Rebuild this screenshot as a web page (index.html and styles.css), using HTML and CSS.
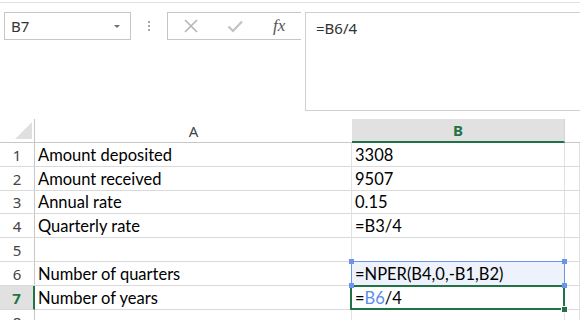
FILE: index.html
```html
<!doctype html>
<html lang="en">
<head>
    <meta charset="UTF-8">
    <title>Book1 - NPER</title>
    <link rel="stylesheet" href="styles.css">
</head>
<body>
<div class="edge"></div>
<div class="formula-row">
    <div class="namebox">
        <span>B7</span>
        <span class="caret"></span>
    </div>
    <div class="grip"><i></i><i></i><i></i></div>
    <div class="fxbox">
        <svg class="icon" width="16" height="16" viewBox="0 0 16 16">
            <path d="M2 2 L14 14 M14 2 L2 14" stroke="#b5b5b5" stroke-width="1.6" fill="none"/>
        </svg>
        <svg class="icon" width="16" height="16" viewBox="0 0 16 16">
            <path d="M1.5 8.5 L6 13 L15 3.5" stroke="#c2c2c2" stroke-width="2.2" fill="none"/>
        </svg>
        <span class="fx">fx</span>
    </div>
    <div class="formula">=B6/4</div>
</div>
<div class="sheet">
    <div class="cell corner"><span class="tri"></span></div>
    <div class="cell colhead">A</div>
    <div class="cell colhead sel">B</div>
    <div class="cell colhead blank"></div>

    <div class="cell rowhead">1</div>
    <div class="cell">Amount deposited</div>
    <div class="cell">3308</div>
    <div class="cell"></div>

    <div class="cell rowhead">2</div>
    <div class="cell">Amount received</div>
    <div class="cell">9507</div>
    <div class="cell"></div>

    <div class="cell rowhead">3</div>
    <div class="cell">Annual rate</div>
    <div class="cell">0.15</div>
    <div class="cell"></div>

    <div class="cell rowhead">4</div>
    <div class="cell">Quarterly rate</div>
    <div class="cell">=B3/4</div>
    <div class="cell"></div>

    <div class="cell rowhead">5</div>
    <div class="cell"></div>
    <div class="cell"></div>
    <div class="cell"></div>

    <div class="cell rowhead">6</div>
    <div class="cell">Number of quarters</div>
    <div class="cell ref">=NPER(B4,0,-B1,B2)
        <b class="knob tl"></b><b class="knob tr"></b><b class="knob bl"></b><b class="knob br"></b>
    </div>
    <div class="cell"></div>

    <div class="cell rowhead sel">7</div>
    <div class="cell">Number of years</div>
    <div class="cell active">=<span class="blue">B6</span>/4<b class="fill"></b></div>
    <div class="cell"></div>

    <div class="cell rowhead">8</div>
    <div class="cell"></div>
    <div class="cell"></div>
    <div class="cell"></div>
</div>
</body>
</html>
```

FILE: styles.css
```css
html,body{
    margin:0px;
    padding:0px;
    width:580px;
    height:320px;
    overflow:hidden;
    background:#fff;
}
.edge{
    height:2px;
    border-bottom:1px solid #e1e1e1;
}
.formula-row{
    display:flex;
    align-items:flex-start;
    padding-top:9px;
    padding-left:4px;
}
.namebox{
    box-sizing:border-box;
    width:127px;
    height:28px;
    border:1px solid #c6c6c6;
    display:flex;
    align-items:center;
    justify-content:space-between;
    padding:0 10px 0 6px;
    font-family:"Noto Sans",sans-serif;
    font-size:15px;
    color:#333;
}
.caret{
    width:0;
    height:0;
    border-left:3px solid transparent;
    border-right:3px solid transparent;
    border-top:3px solid #707070;
}
.grip{
    width:36px;
    height:28px;
    display:flex;
    flex-direction:column;
    align-items:center;
    justify-content:center;
    gap:2px;
}
.grip i{
    width:2px;
    height:2px;
    background:#a8a8a8;
}
.fxbox{
    box-sizing:border-box;
    width:134px;
    height:28px;
    border:1px solid #c6c6c6;
    border-right:none;
    display:flex;
    align-items:center;
    padding-left:15px;
    gap:28px;
}
.fxbox .icon{
    display:block;
}
.fx{
    font-family:"Liberation Serif",serif;
    font-style:italic;
    font-size:17px;
    color:#555;
    margin-left:2px;
}
.formula{
    box-sizing:border-box;
    flex:1;
    margin-left:4px;
    height:99px;
    border:1px solid #d0d0d0;
    border-right:none;
    padding:5px 10px;
    font-family:"Noto Sans",sans-serif;
    font-size:15px;
    color:#333;
}
.sheet{
    margin-top:8px;
    display:grid;
    grid-template-columns:35px 317px 213px 1fr;
    grid-template-rows:24px 24px 24px 23px 24px 24px 24px 24px 24px;
    font-family:"Lato",sans-serif;
    font-size:16.5px;
    color:#000;
}
.cell{
    position:relative;
    box-sizing:border-box;
    border-right:1px solid #e1e1e1;
    border-bottom:1px solid #dadada;
    padding:0 3px 1px;
    display:flex;
    align-items:flex-end;
    white-space:nowrap;
}
.corner{
    border-right:1px solid #c8c8c8;
    border-bottom:1px solid #c8c8c8;
    justify-content:flex-end;
    align-items:flex-end;
    padding:0 2px 3px 0;
}
.tri{
    width:17px;
    height:17px;
    background:#dfdfdf;
    clip-path:polygon(100% 0,100% 100%,0 100%);
}
.colhead{
    font-family:"Noto Sans",sans-serif;
    font-size:15px;
    color:#444;
    justify-content:center;
    align-items:center;
    border-bottom:1px solid #c8c8c8;
    border-right:none;
    padding:0;
}
.colhead.sel{
    background:#e1e1e1;
    color:#217346;
    font-weight:bold;
    border-bottom:2px solid #217346;
    border-right:1px solid #d4d4d4;
}
.rowhead{
    font-family:"Noto Sans",sans-serif;
    font-size:15px;
    color:#444;
    justify-content:center;
    align-items:center;
    border-right:1px solid #c8c8c8;
    padding:0;
}
.rowhead.sel{
    background:#e1e1e1;
    color:#217346;
    font-weight:bold;
    border-right:2px solid #217346;
}
.ref{
    background:#edf2fc;
}
.ref::after{
    content:"";
    position:absolute;
    top:-1px;
    left:-1px;
    right:-1px;
    bottom:-1px;
    border:1px solid #6b96e8;
}
.knob{
    position:absolute;
    width:5px;
    height:5px;
    background:#6b96e8;
    z-index:3;
}
.knob.tl{top:-3px;left:-3px;}
.knob.tr{top:-3px;right:-3px;}
.knob.bl{bottom:-3px;left:-3px;}
.knob.br{bottom:-3px;right:-3px;}
.active::after{
    content:"";
    position:absolute;
    top:-1px;
    left:-2px;
    right:-1px;
    bottom:-1px;
    border:2px solid #217346;
    z-index:2;
}
.blue{
    color:#5b8de8;
}
.fill{
    position:absolute;
    right:-4px;
    bottom:-4px;
    width:5px;
    height:5px;
    background:#217346;
    border:1px solid #fff;
    z-index:3;
}
```
